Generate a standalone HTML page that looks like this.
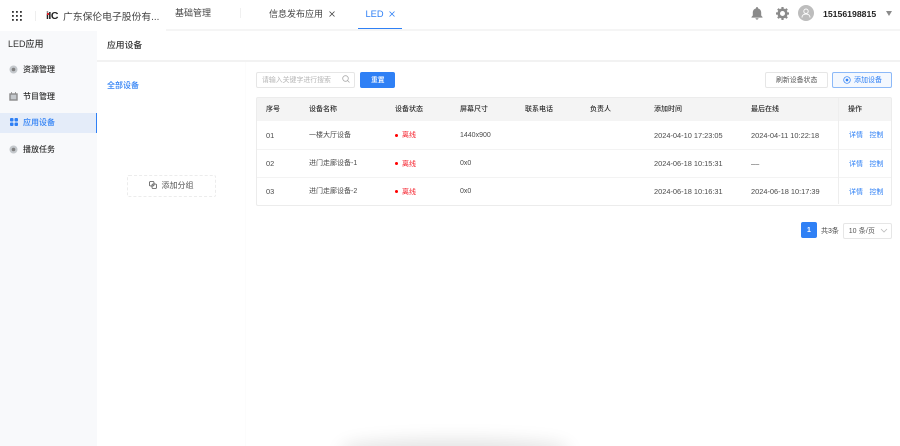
<!DOCTYPE html>
<html lang="zh"><head><meta charset="utf-8"><title>LED</title>
<style>
html,body{margin:0;padding:0;background:#fff}
#p{position:relative;width:900px;height:446px;overflow:hidden;background:#fff;font-family:"Liberation Sans","Noto Sans CJK SC",sans-serif;color:#333;filter:blur(.3px)}
#p div,#p span.a,#p svg{position:absolute}
.t{position:absolute;white-space:nowrap;line-height:12px;font-size:7px;color:#4a4a4a}
.h{color:#2e2e2e;font-weight:500}
.b{color:#2f80f5}
.r{color:#f5222d}
.d{font-size:7.400px}
.dot{width:3px;height:3px;border-radius:50%;background:#f00}
</style></head><body><div id="p">
<!-- sidebar -->
<div style="left:0;top:31px;width:97px;height:415px;background:#f8f9fb"></div>
<div style="left:0;top:112.500px;width:97px;height:20px;background:#e4ecf9"></div>
<div style="left:96px;top:112.500px;width:1.400px;height:20px;background:#2f80f5"></div>
<div style="left:97px;top:60px;width:803px;height:2px;background:#f2f2f2"></div>
<div style="left:166px;top:29px;width:734px;height:2px;background:#f5f5f5"></div>
<div style="left:35px;top:11px;width:1px;height:10px;background:#eee"></div>
<div style="left:240px;top:8px;width:1px;height:10px;background:#f0f0f0"></div>
<div style="left:245px;top:62px;width:1px;height:384px;background:#fcfcfc"></div>
<!-- grid icon -->
<svg style="left:12px;top:11px" width="10" height="10" viewBox="0 0 10 10" fill="#333"><rect x="0" y="0" width="1.800" height="1.800"/><rect x="4" y="0" width="1.800" height="1.800"/><rect x="8" y="0" width="1.800" height="1.800"/><rect x="0" y="4" width="1.800" height="1.800"/><rect x="4" y="4" width="1.800" height="1.800"/><rect x="8" y="4" width="1.800" height="1.800"/><rect x="0" y="8" width="1.800" height="1.800"/><rect x="4" y="8" width="1.800" height="1.800"/><rect x="8" y="8" width="1.800" height="1.800"/></svg>
<span class="t" style="left:46px;top:10px;font-size:10.500px;font-weight:700;color:#222;letter-spacing:-.5px">iIC</span>
<div style="left:46.500px;top:12.500px;width:2px;height:2px;background:#e0202a"></div>
<span class="t" style="left:63px;top:10.500px;font-size:9.800px;line-height:14px;color:#444">广东保伦电子股份有...</span>
<span class="t" style="left:175px;top:7px;font-size:9px;line-height:13px;color:#444">基础管理</span>
<span class="t" style="left:269px;top:7.500px;font-size:9px;line-height:13px;color:#444">信息发布应用</span>
<svg style="left:328.500px;top:11px" width="6" height="6" viewBox="0 0 6 6" stroke="#444" stroke-width=".8" fill="none"><path d="M.5.5l5 5M5.500.5l-5 5"/></svg>
<span class="t b" style="left:365.500px;top:7.500px;font-size:9.300px;line-height:13px">LED</span>
<svg style="left:388.500px;top:11px" width="6" height="6" viewBox="0 0 6 6" stroke="#2f80f5" stroke-width=".8" fill="none"><path d="M.5.5l5 5M5.500.5l-5 5"/></svg>
<div style="left:358px;top:28px;width:44px;height:1.400px;background:#2f80f5"></div>
<!-- right header -->
<svg style="left:751px;top:7px" width="12" height="13" viewBox="0 0 12 13" fill="#8a8a8a"><path d="M6 0c.6 0 1 .4 1 1v.4c2 .5 3.200 2.200 3.200 4.300v2.800L11.500 10v.6H.5V10l1.300-1.500V5.700c0-2.100 1.200-3.800 3.200-4.300V1c0-.6.4-1 1-1zM4.500 11.300h3C7.400 12.200 6.800 12.700 6 12.700s-1.400-.5-1.500-1.400z"/></svg>
<svg style="left:775.500px;top:7px" width="13" height="13" viewBox="0 0 13 13"><circle cx="6.500" cy="6.500" r="3.800" fill="none" stroke="#8a8a8a" stroke-width="2.600"/><g stroke="#8a8a8a" stroke-width="2.200"><path d="M6.500 0v2.500M6.500 10.500V13M0 6.500h2.500M10.500 6.500H13M1.900 1.900l1.800 1.800M9.300 9.300l1.800 1.800M11.100 1.900L9.300 3.700M3.700 9.300l-1.800 1.800"/></g></svg>
<div style="left:797.500px;top:5.300px;width:16px;height:16px;border-radius:50%;background:#bdbdbd"></div>
<svg style="left:800.500px;top:8.300px" width="10" height="10" viewBox="0 0 10 10" fill="none" stroke="#fff" stroke-width=".9"><circle cx="5" cy="3.200" r="2.200"/><path d="M1 9.500c0-2.200 1.700-3.500 4-3.500s4 1.300 4 3.500"/></svg>
<span class="t" style="left:823px;top:7.500px;font-size:8.700px;line-height:13px;font-weight:700;color:#222">15156198815</span>
<div style="left:885.500px;top:11px;width:0;height:0;border-left:3.500px solid transparent;border-right:3.500px solid transparent;border-top:5px solid #8a8a8a"></div>
<!-- sidebar text -->
<span class="t" style="left:8px;top:38px;font-size:9px;line-height:13px;font-weight:500;color:#333">LED应用</span>
<span class="t h" style="left:23px;top:64px;font-size:8px">资源管理</span>
<span class="t h" style="left:23px;top:91px;font-size:8px">节目管理</span>
<span class="t b" style="left:23px;top:117px;font-size:8px;font-weight:500">应用设备</span>
<span class="t h" style="left:23px;top:144px;font-size:8px">播放任务</span>
<svg style="left:9px;top:65px" width="9" height="9" viewBox="0 0 9 9"><circle cx="4.500" cy="4.500" r="4" fill="#c4c8cc"/><circle cx="4.500" cy="4.500" r="1.800" fill="#808080"/></svg>
<svg style="left:9px;top:91.500px" width="9" height="9" viewBox="0 0 9 9"><path d="M2.500 0v2M6.500 0v2" stroke="#888" stroke-width=".8"/><rect x="1" y="2" width="7" height="6" fill="#c4c8cc" stroke="#8a8a8a" stroke-width="1.400"/></svg>
<svg style="left:10px;top:118.300px" width="8" height="8" viewBox="0 0 8 8" fill="#2f80f5"><rect width="3.500" height="3.500" rx="1"/><rect x="4.500" width="3.500" height="3.500" rx="1"/><rect y="4.500" width="3.500" height="3.500" rx="1"/><rect x="4.500" y="4.500" width="3.500" height="3.500" rx="1"/></svg>
<svg style="left:9px;top:145px" width="9" height="9" viewBox="0 0 9 9"><circle cx="4.500" cy="4.500" r="4" fill="#c4c8cc"/><circle cx="4.500" cy="4.500" r="1.800" fill="#808080"/></svg>
<!-- content -->
<span class="t" style="left:107px;top:39px;font-size:8.800px;line-height:13px;font-weight:500;color:#333">应用设备</span>
<span class="t b" style="left:107px;top:80px;font-size:8px;font-weight:500">全部设备</span>
<div style="left:127px;top:175px;width:87px;height:19.500px;border:1px dashed #ececec;border-radius:2px"></div>
<svg style="left:149px;top:181px" width="8" height="8" viewBox="0 0 8 8" fill="none" stroke="#555" stroke-width=".8"><rect x=".5" y=".5" width="4.500" height="4.500" rx="1.200"/><rect x="3" y="3" width="4.500" height="4.500" rx="1.200"/></svg>
<span class="t" style="left:161.500px;top:179.500px;font-size:8px;color:#555">添加分组</span>
<!-- search -->
<div style="left:256px;top:71.500px;width:97px;height:14px;border:1px solid #e6e6e6;border-radius:2px"></div>
<span class="t" style="left:262px;top:75px;font-size:6.900px;color:#b5b5b5">请输入关键字进行搜索</span>
<svg style="left:342px;top:75px" width="8" height="8" viewBox="0 0 8 8" fill="none" stroke="#aaa" stroke-width=".8"><circle cx="3.500" cy="3.500" r="2.800"/><path d="M5.500 5.500L7.500 7.500"/></svg>
<div style="left:360px;top:71.500px;width:34.500px;height:16px;background:#2f80f5;border-radius:2px"></div>
<span class="t" style="left:371px;top:75px;font-size:6.800px;color:#fff;font-weight:500">重置</span>
<div style="left:765px;top:71.500px;width:61px;height:14px;border:1px solid #e6e6e6;border-radius:2px"></div>
<span class="t" style="left:776px;top:75px;font-size:6.900px;color:#555">刷新设备状态</span>
<div style="left:832px;top:71.500px;width:58px;height:14px;border:1px solid #8cb9f8;border-radius:2px;background:#f4f8fe"></div>
<svg style="left:843px;top:76px" width="8" height="8" viewBox="0 0 8 8" fill="none" stroke="#2f80f5" stroke-width=".7"><circle cx="4" cy="4" r="3.300"/><circle cx="4" cy="4" r="1" fill="#2f80f5"/></svg>
<span class="t b" style="left:854px;top:75px;font-size:7px">添加设备</span>
<!-- table -->
<div style="left:257px;top:98px;width:634px;height:23px;background:#f4f4f4"></div>
<div style="left:256px;top:97px;width:634px;height:106.500px;border:1px solid #ececec;border-radius:2px"></div>
<div style="left:257px;top:148.500px;width:634px;height:1px;background:#f3f3f3"></div>
<div style="left:257px;top:177px;width:634px;height:1px;background:#f3f3f3"></div>
<div style="left:837.500px;top:98px;width:1px;height:106px;background:#eee"></div>
<span class="t h" style="left:266px;top:104px">序号</span>
<span class="t h" style="left:309px;top:104px">设备名称</span>
<span class="t h" style="left:395px;top:104px">设备状态</span>
<span class="t h" style="left:460px;top:104px">屏幕尺寸</span>
<span class="t h" style="left:525px;top:104px">联系电话</span>
<span class="t h" style="left:590px;top:104px">负责人</span>
<span class="t h" style="left:654px;top:104px">添加时间</span>
<span class="t h" style="left:751px;top:104px">最后在线</span>
<span class="t h" style="left:848px;top:104px">操作</span>

<span class="t d" style="left:266px;top:129.500px">01</span>
<span class="t" style="left:309px;top:129.500px">一楼大厅设备</span>
<div class="dot" style="left:395.300px;top:134px"></div>
<span class="t r" style="left:402px;top:130px">离线</span>
<span class="t" style="left:460px;top:129.500px">1440x900</span>
<span class="t d" style="left:654px;top:129.500px">2024-04-10 17:23:05</span>
<span class="t d" style="left:751px;top:129.500px">2024-04-11 10:22:18</span>
<span class="t b" style="left:849px;top:130px">详情</span>
<span class="t b" style="left:869.500px;top:130px">控制</span>

<span class="t d" style="left:266px;top:158px">02</span>
<span class="t" style="left:309px;top:158px">进门走廊设备-1</span>
<div class="dot" style="left:395.300px;top:162px"></div>
<span class="t r" style="left:402px;top:158.500px">离线</span>
<span class="t" style="left:460px;top:158px">0x0</span>
<span class="t d" style="left:654px;top:158px">2024-06-18 10:15:31</span>
<span class="t d" style="left:751px;top:158px">––</span>
<span class="t b" style="left:849px;top:158.500px">详情</span>
<span class="t b" style="left:869.500px;top:158.500px">控制</span>

<span class="t d" style="left:266px;top:186px">03</span>
<span class="t" style="left:309px;top:186px">进门走廊设备-2</span>
<div class="dot" style="left:395.300px;top:190px"></div>
<span class="t r" style="left:402px;top:186.500px">离线</span>
<span class="t" style="left:460px;top:186px">0x0</span>
<span class="t d" style="left:654px;top:186px">2024-06-18 10:16:31</span>
<span class="t d" style="left:751px;top:186px">2024-06-18 10:17:39</span>
<span class="t b" style="left:849px;top:186.500px">详情</span>
<span class="t b" style="left:869.500px;top:186.500px">控制</span>
<!-- pagination -->
<div style="left:801px;top:222.300px;width:15.700px;height:16px;background:#2f80f5;border-radius:2px"></div>
<span class="t" style="left:807px;top:225px;color:#fff;font-weight:700">1</span>
<span class="t" style="left:821px;top:225.500px;color:#444">共3条</span>
<div style="left:842.500px;top:222.500px;width:47.500px;height:14px;border:1px solid #e6e6e6;border-radius:2px"></div>
<span class="t" style="left:848.700px;top:225.500px;color:#555;letter-spacing:.1px">10 条/页</span>
<svg style="left:880px;top:228px" width="8" height="5" viewBox="0 0 8 5" fill="none" stroke="#bbb" stroke-width=".8"><path d="M1 1l3 3 3-3"/></svg>
<!-- bottom shadow -->
<div style="left:352px;top:450px;width:206px;height:6px;border-radius:50%;background:#ddd;box-shadow:0 0 18px 10px #e2e2e2"></div>
</div></body></html>
